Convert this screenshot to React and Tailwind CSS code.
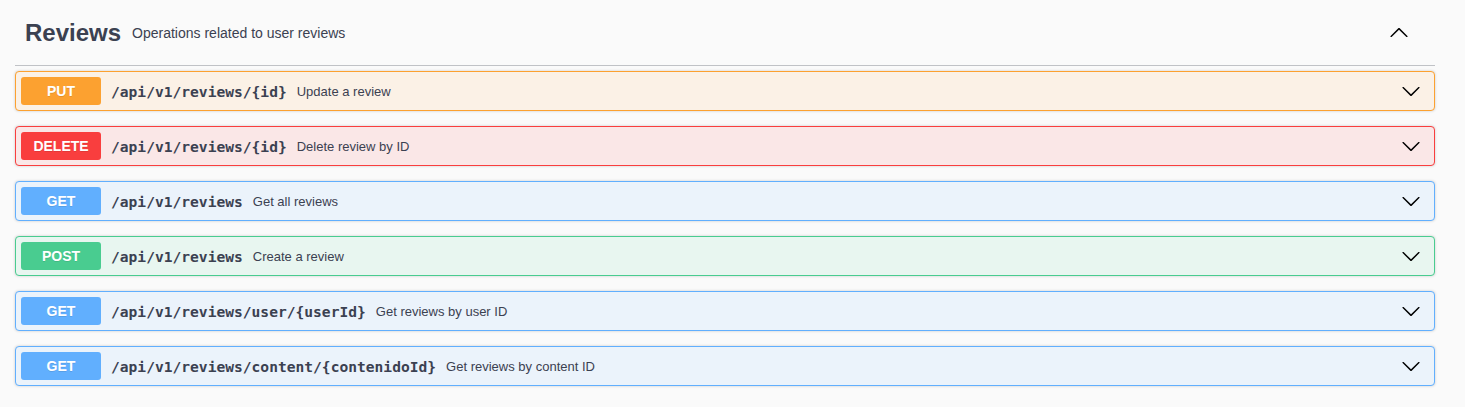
import React from "react";

// operations shown under the tag
const ops = [
  { method: "PUT", path: "/api/v1/reviews/{id}", summary: "Update a review" },
  { method: "DELETE", path: "/api/v1/reviews/{id}", summary: "Delete review by ID" },
  { method: "GET", path: "/api/v1/reviews", summary: "Get all reviews" },
  { method: "POST", path: "/api/v1/reviews", summary: "Create a review" },
  { method: "GET", path: "/api/v1/reviews/user/{userId}", summary: "Get reviews by user ID" },
  { method: "GET", path: "/api/v1/reviews/content/{contenidoId}", summary: "Get reviews by content ID" },
];

const styles = {
  PUT: { block: "border-[#fca130] bg-[#fbf1e6]", badge: "bg-[#fca130]" },
  DELETE: { block: "border-[#f93e3e] bg-[#fae7e7]", badge: "bg-[#f93e3e]" },
  GET: { block: "border-[#61affe] bg-[#ebf3fb]", badge: "bg-[#61affe]" },
  POST: { block: "border-[#49cc90] bg-[#e8f6f0]", badge: "bg-[#49cc90]" },
};

function Arrow({ up }) {
  return (
    <svg
      width="20"
      height="20"
      viewBox="0 0 20 20"
      className={up ? "rotate-180" : ""}
      fill="#000"
    >
      <path d="M17.418 6.109c.272-.268.709-.268.979 0s.271.701 0 .969l-7.908 7.83c-.27.268-.707.268-.979 0l-7.908-7.83c-.27-.268-.27-.701 0-.969.271-.268.709-.268.979 0L10 13.25l7.418-7.141z" />
    </svg>
  );
}

function OpBlock({ method, path, summary }) {
  const s = styles[method];
  return (
    <div
      className={`mb-[15px] flex h-[40px] items-center rounded border p-[5px] shadow-[0_0_3px_rgba(0,0,0,0.19)] ${s.block}`}
    >
      <span
        className={`flex h-[28px] w-[80px] shrink-0 items-center justify-center rounded-[3px] pt-[1px] text-[14px] font-bold text-white [text-shadow:0_1px_0_rgba(0,0,0,0.1)] ${s.badge}`}
      >
        {method}
      </span>
      <span className="px-[10px] pt-[1px] font-['DejaVu_Sans_Mono',monospace] text-[14.6px] font-bold text-[#3b4151]">
        {path}
      </span>
      <span className="pt-[1px] text-[13px] text-[#3b4151]">{summary}</span>
      <span className="ml-auto mr-[8px] flex">
        <Arrow />
      </span>
    </div>
  );
}

export default function App() {
  return (
    <div className="min-h-[407px] bg-[#fafafa] pl-[15px] pr-[30px] font-['Liberation_Sans',Arial,sans-serif] text-[#3b4151]">
      {/* Tag header */}
      <div className="mb-[5px] flex h-[66px] items-center border-b border-[#3b4151]/30 pl-[10px]">
        <h3 className="text-[24px] font-bold leading-none">Reviews</h3>
        <span className="ml-[11px] pt-[2px] text-[14px]">
          Operations related to user reviews
        </span>
        <span className="ml-auto mr-[26px] flex">
          <Arrow up />
        </span>
      </div>

      {ops.map((op, i) => (
        <OpBlock key={i} {...op} />
      ))}
    </div>
  );
}
